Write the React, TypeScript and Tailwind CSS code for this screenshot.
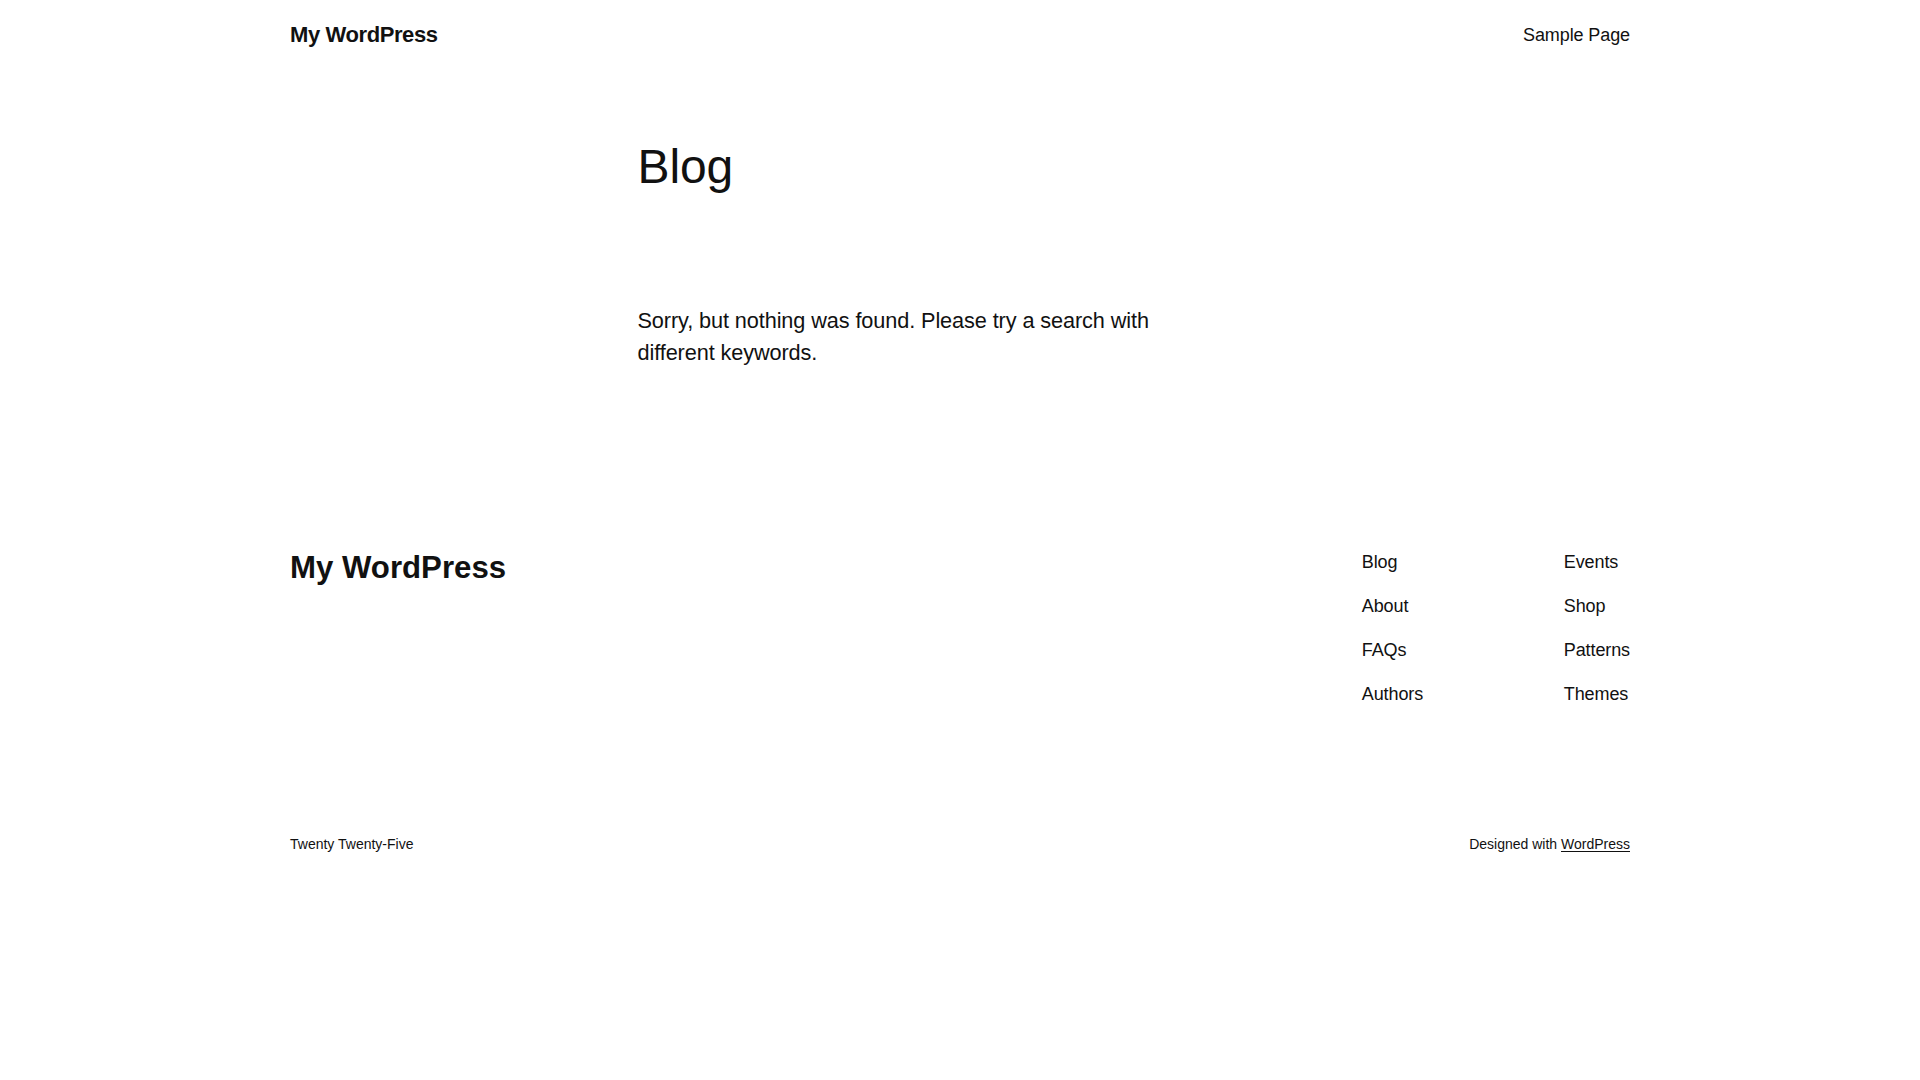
export default function App() {
  const colA = ["Blog", "About", "FAQs", "Authors"];
  const colB = ["Events", "Shop", "Patterns", "Themes"];

  return (
    <div className="min-h-screen bg-white text-[#111111] font-['Liberation_Sans',Arial,sans-serif] tracking-[-0.1px]">
      <header className="mx-auto flex w-[1340px] items-center justify-between pt-[20px]">
        <a href="#" className="text-[22px] font-bold leading-[1.4] tracking-[-0.4px]">
          My WordPress
        </a>
        <nav>
          <a href="#" className="text-[18px] leading-[28px]">
            Sample Page
          </a>
        </nav>
      </header>

      <main className="mx-auto w-[645px]">
        <h1 className="mt-[89px] text-[48px] font-normal leading-[1.125]">Blog</h1>
        <p className="mt-[111.3px] max-w-[560px] text-[21.7px] leading-[31.5px]">
          Sorry, but nothing was found. Please try a search with different keywords.
        </p>
      </main>

      <footer className="mx-auto mt-[178px] w-[1340px]">
        <div className="flex items-start justify-between">
          <a href="#" className="text-[31.2px] font-bold leading-[1.4] tracking-normal">
            My WordPress
          </a>
          <div className="flex pt-[1.6px]">
            <ul className="flex w-[202px] flex-col gap-[16.2px]">
              {colA.map((l) => (
                <li key={l}>
                  <a href="#" className="text-[18px] leading-[28px]">
                    {l}
                  </a>
                </li>
              ))}
            </ul>
            <ul className="flex flex-col gap-[16.2px]">
              {colB.map((l) => (
                <li key={l}>
                  <a href="#" className="text-[18px] leading-[28px]">
                    {l}
                  </a>
                </li>
              ))}
            </ul>
          </div>
        </div>

        <div className="mt-[126.4px] flex items-center justify-between text-[14px] leading-[1.4] tracking-normal">
          <p>Twenty Twenty-Five</p>
          <p>
            Designed with{" "}
            <a href="#" className="underline underline-offset-2">
              WordPress
            </a>
          </p>
        </div>
      </footer>
    </div>
  );
}
